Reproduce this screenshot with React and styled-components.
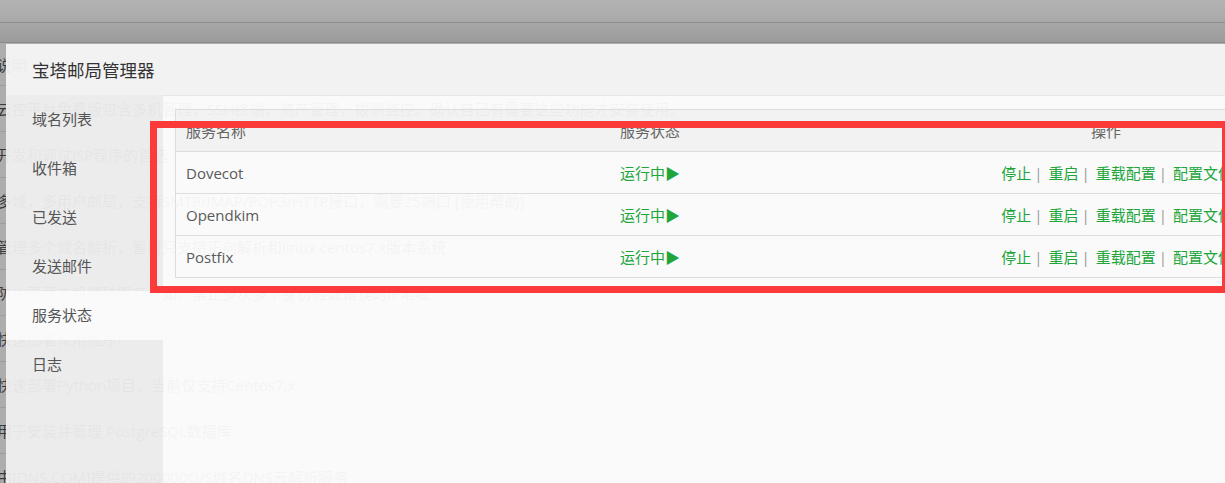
import React from 'react';
import styled, { createGlobalStyle } from 'styled-components';

const GlobalStyle = createGlobalStyle`
  html, body {
    margin: 0;
    padding: 0;
    overflow: hidden;
  }
  body {
    background: #adadad;
    font-family: "Open Sans", "Noto Sans CJK SC", sans-serif;
    font-size: 15px;
  }
`;

const plugins = [
  '云控平台免费版包含多机管理，SSH终端，资产管理，拨测监控。确认自己有需要这些功能才安装使用。',
  '开发和调试JSP程序的首选',
  '多域，多用户邮局，支持SMTP/IMAP/POP3/HTTP接口，需要25端口 [使用帮助]',
  '管理多个域名解析，暂时只支持正向解析和linux centos7.x版本系统',
  '防止恶意主机爆破服务，如：禁止多次多个身份验证错误的IP地址',
  '快速部署常用程序!',
  '快速部署Python项目，当前仅支持Centos7.x',
  '用于安装并管理 PostgreSQL数据库',
  '由[DNS.COM]提供的200000Q/S域名DNS云解析服务',
];

const menu = ['域名列表', '收件箱', '已发送', '发送邮件', '服务状态', '日志'];
const services = ['Dovecot', 'Opendkim', 'Postfix'];
const actions = ['停止', '重启', '重载配置', '配置文件'];

const App = () => {
  return (
    <Page>
      <GlobalStyle />
      <TopBar />
      <HeadBand />
      <PluginRow $head>说明</PluginRow>
      {plugins.map(text => (
        <PluginRow key={text}>{text}</PluginRow>
      ))}

      <Layer>
        <LayerTitle>宝塔邮局管理器</LayerTitle>
        <LayerBody>
          <SideMenu>
            {menu.map(item => (
              <MenuItem key={item} $active={item === '服务状态'}>
                {item}
              </MenuItem>
            ))}
          </SideMenu>
          <Content>
            <Table>
              <Row $head>
                <Cell>服务名称</Cell>
                <Cell>服务状态</Cell>
                <Cell $align="center">操作</Cell>
              </Row>
              {services.map(name => (
                <Row key={name}>
                  <Cell>{name}</Cell>
                  <Cell>
                    <Status>运行中▶</Status>
                  </Cell>
                  <Cell $align="right">
                    {actions.map((act, i) => (
                      <React.Fragment key={act}>
                        <OpLink>{act}</OpLink>
                        {i < actions.length - 1 && <Sep>|</Sep>}
                      </React.Fragment>
                    ))}
                  </Cell>
                </Row>
              ))}
            </Table>
          </Content>
        </LayerBody>
      </Layer>

      <Highlight />
    </Page>
  );
};

const Page = styled.div`
  position: relative;
  width: 1225px;
  height: 483px;
  overflow: hidden;
  background: #adadad;
`;

const TopBar = styled.div`
  height: 22px;
  background: linear-gradient(#b3b3b3, #a9a9a9);
  border-bottom: 1px solid #8e8e8e;
`;

const HeadBand = styled.div`
  height: 19px;
  background: linear-gradient(#a7a7a7, #9b9b9b);
  border-bottom: 1px solid #8a8a8a;
`;

const PluginRow = styled.div`
  display: flex;
  align-items: center;
  height: ${props => (props.$head ? 42 : 45)}px;
  margin-left: -3px;
  border-bottom: 1px solid #9c9c9c;
  color: #3a3a3a;
  white-space: nowrap;
`;

const Layer = styled.div`
  position: absolute;
  top: 44px;
  left: 6px;
  width: 1300px;
  height: 460px;
  display: flex;
  flex-direction: column;
`;

const LayerTitle = styled.div`
  height: 51px;
  display: flex;
  align-items: center;
  padding-left: 26px;
  background: rgba(247, 247, 247, 0.94);
  color: #333;
  font-size: 17.5px;
`;

const LayerBody = styled.div`
  flex: 1;
  display: flex;
`;

const SideMenu = styled.ul`
  width: 157px;
  margin: 0;
  padding: 0;
  list-style: none;
  background: rgba(240, 240, 240, 0.94);
`;

const MenuItem = styled.li`
  height: 49px;
  line-height: 49px;
  padding-left: 26px;
  color: #555;
  background: ${props => (props.$active ? 'rgba(255, 255, 255, 0.74)' : 'transparent')};
`;

const Content = styled.div`
  flex: 1;
  padding: 13px 12px;
  border-top: 1px solid #e6e6e6;
  background: rgba(255, 255, 255, 0.94);
`;

const Table = styled.div`
  width: 1070px;
  border: 1px solid #ddd;
`;

const Row = styled.div`
  display: grid;
  grid-template-columns: 434px 356px 1fr;
  align-items: center;
  height: 41px;
  color: ${props => (props.$head ? '#666' : '#5a5a5a')};
  background: ${props => (props.$head ? 'rgba(0, 0, 0, 0.032)' : 'transparent')};

  & + & {
    border-top: 1px solid #ddd;
  }
`;

const Cell = styled.div`
  padding: ${props => (props.$align === 'right' ? '0 13px 0 10px' : '0 10px')};
  text-align: ${props => props.$align || 'left'};
  white-space: nowrap;
  overflow: hidden;
`;

const Status = styled.span`
  color: #20a53a;
`;

const OpLink = styled.a`
  color: #20a53a;
  text-decoration: none;
  cursor: pointer;
`;

const Sep = styled.span`
  margin: 0 6px 0 3px;
  color: #999;
`;

const Highlight = styled.div`
  position: absolute;
  left: 150px;
  top: 121px;
  width: 1079px;
  height: 172px;
  box-sizing: border-box;
  border: 7px solid #fd3a3a;
  pointer-events: none;
`;

export default App;
